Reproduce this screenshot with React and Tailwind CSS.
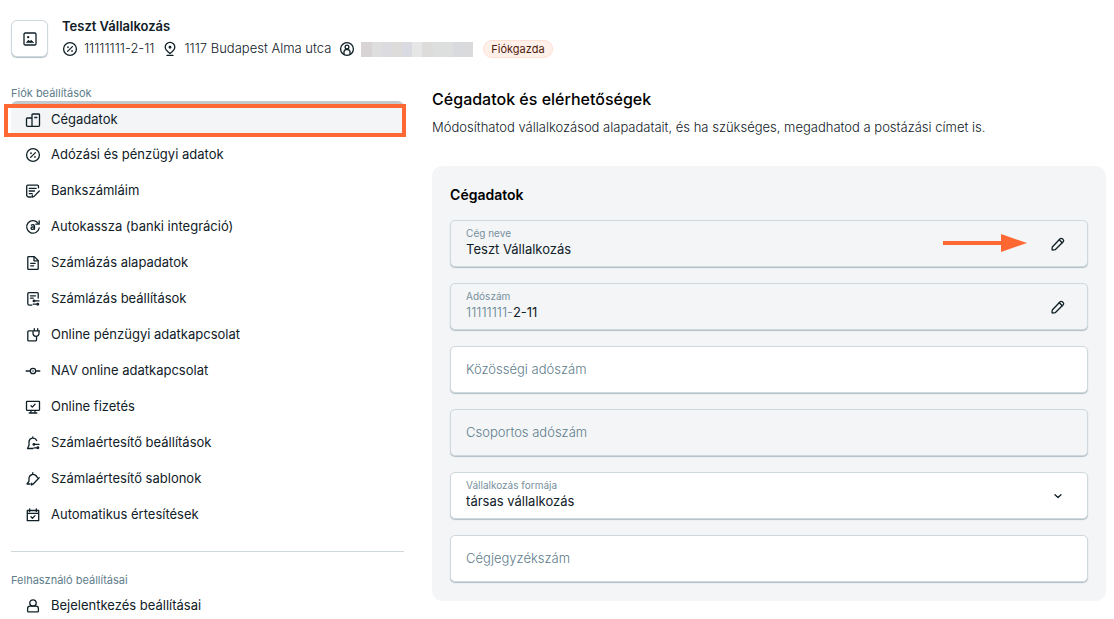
import { useState } from 'react';

const ICONS = {
  image: (
    <>
      <rect x="2" y="2" width="12" height="12" rx="1.2" />
      <path d="M4.7 11.3 6.3 9.3l1.5 1 1.7-.8 1.8 1.8z" fill="currentColor" strokeWidth="0.8" />
      <circle cx="6.2" cy="6.2" r="0.5" fill="currentColor" />
    </>
  ),
  building: (
    <>
      <path d="M7 14.3V2.8a.8.8 0 0 1 .8-.8h5.9a.8.8 0 0 1 .8.8v10.7a.8.8 0 0 1-.8.8H2.3a.8.8 0 0 1-.8-.8V6.8a.8.8 0 0 1 .8-.8H7" />
      <path d="M9.8 5.5h2" />
    </>
  ),
  percent: (
    <>
      <circle cx="8" cy="8" r="6.4" />
      <path d="m5.6 10.4 4.8-4.8" />
      <circle cx="6" cy="6.2" r="0.3" fill="currentColor" />
      <circle cx="10" cy="9.9" r="0.3" fill="currentColor" />
    </>
  ),
  bank: (
    <>
      <path d="M6 14H3.2l-1.5-1.2V3.2c0-.6.4-1 1-1h9.8c.6 0 1 .4 1 1v1.6" />
      <path d="M4.2 5.3h7M4.2 8h5.3M4.2 10.7h3" />
      <path d="m14.3 8-5.5 5.6-1.8.5.4-2" />
    </>
  ),
  auto: (
    <>
      <path d="M13.2 4.3A6.3 6.3 0 1 0 14.2 9" />
      <path d="M14.2 1.8v3.4h-3.4" />
      <path d="M6.3 6.2c1-.8 3.2-.7 3.2.9v3.2M9.5 8H7.6c-2 .1-2 2.3-.2 2.3 1.2 0 2.1-.6 2.1-1.5" />
    </>
  ),
  file: (
    <>
      <path d="M9.3 1.6H3.5a.7.7 0 0 0-.7.7v11.4c0 .4.3.7.7.7h9c.4 0 .7-.3.7-.7V5.5z" />
      <path d="M9 1.8v4h4M5.7 8.3h4.5M5.7 10.8h3" />
    </>
  ),
  fileSettings: (
    <>
      <path d="M13.2 7V2.5a.8.8 0 0 0-.8-.8H3.8a1 1 0 0 0-1 1v9.8c0 1 .5 1.6 1.5 1.6h2.5" />
      <path d="M5.5 4.8h5M5.5 7.2h2.7M10 9.9h4M8.2 13.2h3.6" />
      <circle cx="9" cy="9.9" r="0.8" />
      <circle cx="12.8" cy="13.2" r="0.8" />
    </>
  ),
  plug: (
    <>
      <path d="M6.5 3.8H3.8a1 1 0 0 0-1 1v8.1a1 1 0 0 0 1 1h6.7a1 1 0 0 0 1-1V10" />
      <path d="M7.5 3.8h7M8 4v2.3a3 3 0 0 0 6 0V4M9.3 3.5V1.7M12.7 3.5V1.7" />
    </>
  ),
  node: (
    <>
      <circle cx="8" cy="8" r="2.7" />
      <path d="M1.2 8h4M10.8 8h4" />
      <circle cx="8" cy="8" r="0.2" fill="currentColor" />
    </>
  ),
  monitor: (
    <>
      <rect x="1.5" y="2.3" width="13" height="9" rx="0.5" />
      <path d="M6 11.5v2.3M10 11.5v2.3M4.2 14h7.6M6 6.8l1.3 1.3L10 5.3" />
    </>
  ),
  bellSettings: (
    <>
      <path d="M11.7 5.6A4 4 0 0 0 4 7v3.2l-1.5 3.3H8M7.8 3V1.8" />
      <path d="M10 9.4h4M9 12.8h3" />
      <circle cx="8.9" cy="9.4" r="0.8" />
      <circle cx="12.9" cy="12.8" r="0.8" />
    </>
  ),
  bellEdit: (
    <>
      <path d="M11.4 5.2A4.1 4.1 0 0 0 4 6.7v3.5L2 13h3.2M7.8 2.8V1.7" />
      <path d="m14.2 6.8-6.2 6.4-1.5.8.3-1.8" />
      <path d="m11.4 5.2 1.2 1.6" />
    </>
  ),
  calendar: (
    <>
      <path d="M2.3 3.5h11.4v10.2H2.3zM2.3 6.3h11.4M4.7 1.8v2.7M11.3 1.8v2.7" />
      <path d="m6 9.8 1.4 1.4 2.6-2.6" />
    </>
  ),
  user: (
    <>
      <circle cx="8" cy="5" r="3.2" />
      <path d="M5 8.2h6a2.5 2.5 0 0 1 2.4 2.5v2.2a1 1 0 0 1-1 1H3.6a1 1 0 0 1-1-1v-2.2A2.5 2.5 0 0 1 5 8.2z" />
    </>
  ),
  userCircle: (
    <>
      <circle cx="8" cy="8" r="6.4" />
      <circle cx="8" cy="6" r="1.9" />
      <path d="M5 13.3V11a2.3 2.3 0 0 1 2.3-2.3h1.4A2.3 2.3 0 0 1 11 11v2.3" />
    </>
  ),
  pin: (
    <>
      <path d="M8 12.6C5.8 10.8 3.2 8.8 3.2 6.2a4.8 4.8 0 0 1 9.6 0c0 2.6-2.6 4.6-4.8 6.4z" />
      <circle cx="8" cy="6.2" r="0.8" fill="currentColor" />
      <path d="M5 14.4h6" />
    </>
  ),
  pencil: (
    <>
      <path d="m2.3 11 7.8-8.2a1.6 1.6 0 0 1 2.3 0l.8.8a1.6 1.6 0 0 1 0 2.2L5.2 13.7l-2.7.3a.5.5 0 0 1-.5-.5z" />
      <path d="m9.3 3.8 2.9 2.9" />
    </>
  ),
  chevron: <path d="m5 6.7 3 2.8 3-2.8" />,
};

function Icon({ name }) {
  return (
    <svg
      viewBox="0 0 16 16"
      className="size-4 shrink-0"
      fill="none"
      stroke="currentColor"
      strokeWidth="1.3"
      strokeLinecap="round"
      strokeLinejoin="round"
      aria-hidden="true"
    >
      {ICONS[name]}
    </svg>
  );
}

const ACCOUNT_ITEMS = [
  { icon: 'building', label: 'Cégadatok' },
  { icon: 'percent', label: 'Adózási és pénzügyi adatok' },
  { icon: 'bank', label: 'Bankszámláim' },
  { icon: 'auto', label: 'Autokassza (banki integráció)' },
  { icon: 'file', label: 'Számlázás alapadatok' },
  { icon: 'fileSettings', label: 'Számlázás beállítások' },
  { icon: 'plug', label: 'Online pénzügyi adatkapcsolat' },
  { icon: 'node', label: 'NAV online adatkapcsolat' },
  { icon: 'monitor', label: 'Online fizetés' },
  { icon: 'bellSettings', label: 'Számlaértesítő beállítások' },
  { icon: 'bellEdit', label: 'Számlaértesítő sablonok' },
  { icon: 'calendar', label: 'Automatikus értesítések' },
];

const MASK_COLORS = [
  '#d8d4d6', '#dedede', '#dcdce0', '#dddcda', '#dadbe2', '#e6e6e7',
  '#dddcda', '#dddede', '#dddede', '#d9dade', '#dadadc',
];

function Header() {
  return (
    <header className="flex items-start gap-3.5">
      <button
        type="button"
        aria-label="Logó"
        className="flex size-[37px] shrink-0 items-center justify-center rounded-md border border-[#cfd8dc] bg-white shadow-[0_1px_1px_#b0bec5]"
      >
        <Icon name="image" />
      </button>
      <div className="text-[13px]">
        <h1 className="-mt-1 font-semibold leading-5">Teszt Vállalkozás</h1>
        <div className="mt-[3px] flex h-5 items-center font-light">
          <Icon name="percent" />
          <span className="ml-1.5">11111111-2-11</span>
          <span className="ml-2"><Icon name="pin" /></span>
          <span className="ml-1.5">1117 Budapest Alma utca</span>
          <span className="ml-2"><Icon name="userCircle" /></span>
          <div className="ml-1.5 flex h-[15px] w-28">
            {MASK_COLORS.map((color, i) => (
              <div key={i} className="flex-1" style={{ backgroundColor: color }} />
            ))}
          </div>
          <span className="ml-2.5 rounded-full border border-[#ffe0d3] bg-[#fff0ea] px-[7px] text-[11px] font-normal leading-4 text-[#4e1c0c]">
            Fiókgazda
          </span>
        </div>
      </div>
    </header>
  );
}

function NavItem({ icon, label, active }) {
  return (
    <li className="relative">
      <a
        href="#"
        className={`flex h-9 items-center gap-2.5 rounded-md pl-3.5 text-[13px] ${
          active ? 'border-t-3 border-[#c3cacd] bg-[#f3f5f7] pb-0.5' : ''
        }`}
      >
        <Icon name={icon} />
        {label}
      </a>
      {active && (
        <div className="pointer-events-none absolute -left-[7px] -right-0.5 top-[3px] bottom-0 border-4 border-[#ff6833]" />
      )}
    </li>
  );
}

function Sidebar() {
  return (
    <nav>
      <h2 className="text-[11px] leading-4 text-[#607d8b]">Fiók beállítások</h2>
      <ul>
        {ACCOUNT_ITEMS.map((item, i) => (
          <NavItem key={item.label} {...item} active={i === 0} />
        ))}
      </ul>
      <hr className="mt-[18px] border-[#cfd8dc]" />
      <h2 className="mt-5 text-[11px] leading-4 text-[#607d8b]">Felhasználó beállításai</h2>
      <ul>
        <NavItem icon="user" label="Bejelentkezés beállításai" />
      </ul>
    </nav>
  );
}

const boxClass =
  'relative flex h-[47px] items-center rounded-[5px] border border-[#cfd8dc] pl-[15px] pr-[21px] shadow-[0_1px_1px_#b0bec5]';

function Field({ id, label, prefix, defaultValue, muted, editable, children }) {
  return (
    <div className={`${boxClass} ${muted ? 'bg-[#f3f5f7]' : 'bg-white'}`}>
      <div className="min-w-0 flex-1 self-start pt-1.5">
        <label htmlFor={id} className="block text-[10px] leading-3 text-[#78909c]">{label}</label>
        <div className="flex text-[13px] leading-5">
          {prefix && <span className="font-light text-[#607d8b]">{prefix}</span>}
          {children || (
            <input id={id} defaultValue={defaultValue} className="h-5 min-w-0 flex-1 outline-none" />
          )}
        </div>
      </div>
      {editable && (
        <button type="button" aria-label={`${label} szerkesztése`}>
          <Icon name="pencil" />
        </button>
      )}
    </div>
  );
}

function EmptyField({ label, muted }) {
  return (
    <div className={`${boxClass} ${muted ? 'bg-[#f3f5f7]' : 'bg-white'}`}>
      <input
        aria-label={label}
        placeholder={label}
        className="w-full text-[13px] font-light outline-none placeholder:text-[#607d8b]"
      />
    </div>
  );
}

function CompanyForm() {
  const [form, setForm] = useState('tarsas');

  return (
    <section className="mt-[29px] rounded-[10px] bg-[#f3f5f7] px-[18px] pb-[19px] pt-[19px]">
      <h3 className="text-sm font-semibold leading-5 text-black">Cégadatok</h3>
      <form className="mt-[15px] flex flex-col gap-4">
        <div className="relative">
          <Field id="name" label="Cég neve" defaultValue="Teszt Vállalkozás" muted editable />
          <svg
            viewBox="0 0 84 18"
            className="pointer-events-none absolute right-[61px] top-3.5 h-[18px] w-[84px]"
            fill="#ff6833"
            aria-hidden="true"
          >
            <path d="M0 7h58V0l26 9-26 9v-7H0z" />
          </svg>
        </div>
        <Field id="tax" label="Adószám" prefix="11111111-" defaultValue="2-11" muted editable />
        <EmptyField label="Közösségi adószám" />
        <EmptyField label="Csoportos adószám" muted />
        <Field id="type" label="Vállalkozás formája">
          <select
            id="type"
            value={form}
            onChange={(e) => setForm(e.target.value)}
            className="h-5 flex-1 appearance-none outline-none"
          >
            <option value="tarsas">társas vállalkozás</option>
            <option value="egyeni">egyéni vállalkozás</option>
          </select>
          <span className="pointer-events-none absolute right-[21px] top-[15px]">
            <Icon name="chevron" />
          </span>
        </Field>
        <EmptyField label="Cégjegyzékszám" />
      </form>
    </section>
  );
}

export default function App() {
  return (
    <div className="bg-white pb-1 pl-[11px] pr-2 pt-5 font-[Inter,sans-serif] text-[#102027]">
      <Header />
      <div className="mt-[26px] grid grid-cols-[7fr_12fr] items-start gap-7">
        <Sidebar />
        <main className="pt-0.5">
          <h2 className="text-base font-medium leading-6 text-black">Cégadatok és elérhetőségek</h2>
          <p className="mt-1.5 text-[13px] font-light leading-5">
            Módosíthatod vállalkozásod alapadatait, és ha szükséges, megadhatod a postázási címet is.
          </p>
          <CompanyForm />
        </main>
      </div>
    </div>
  );
}
